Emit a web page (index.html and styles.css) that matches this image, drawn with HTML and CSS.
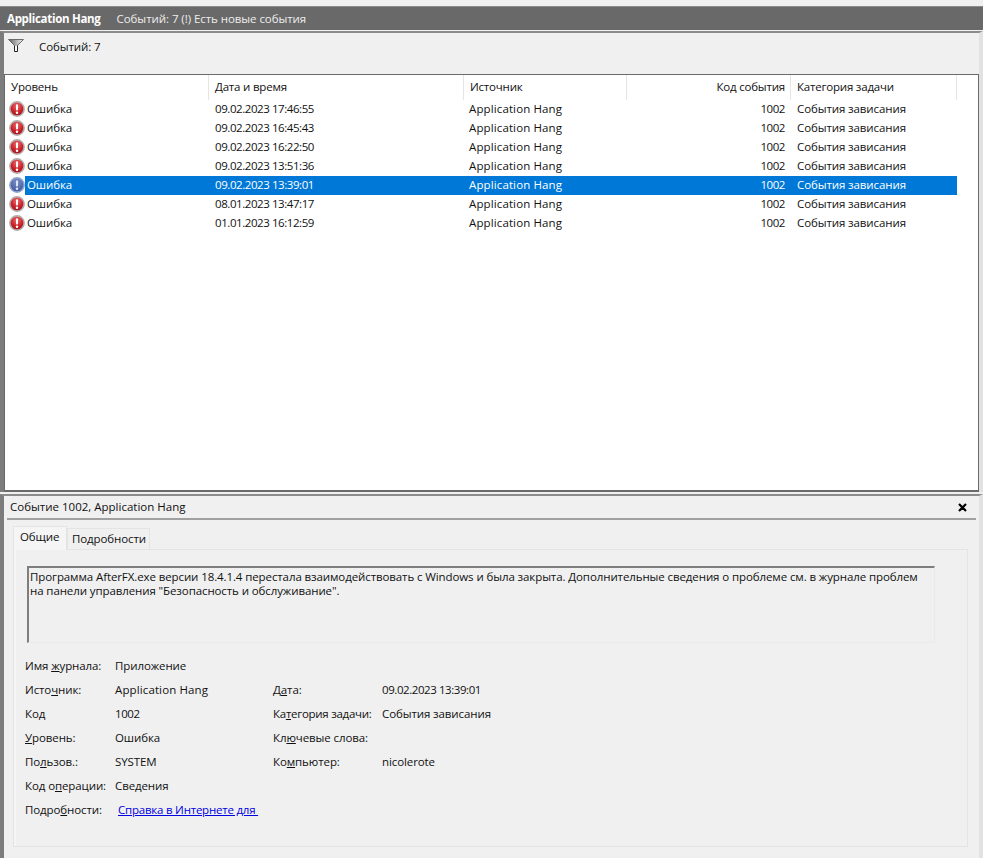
FILE: index.html
```html
<!DOCTYPE html>
<html lang="ru">
<head>
<meta charset="utf-8">
<title>Application Hang</title>
<link rel="stylesheet" href="styles.css">
</head>
<body>
<svg class="defs" width="0" height="0">
  <defs>
    <radialGradient id="red" cx="50%" cy="30%" r="70%">
      <stop offset="0" stop-color="#f06a6a"/><stop offset=".6" stop-color="#c9222a"/><stop offset="1" stop-color="#a30f18"/>
    </radialGradient>
    <radialGradient id="blue" cx="50%" cy="30%" r="70%">
      <stop offset="0" stop-color="#7b90c8"/><stop offset="1" stop-color="#3d5596"/>
    </radialGradient>
    <linearGradient id="fun" x1="0" x2="1" y1="0" y2="0">
      <stop offset="0" stop-color="#5f5f5f"/><stop offset=".55" stop-color="#b5b5b5"/><stop offset="1" stop-color="#f4f4f4"/>
    </linearGradient>
    <symbol id="err" viewBox="0 0 16 16">
      <circle cx="8" cy="8" r="7.1" fill="url(#red)" stroke="#b3aaaa" stroke-width="1.6"/>
      <rect x="7" y="3.2" width="2" height="6.4" rx="1" fill="#fff"/>
      <circle cx="8" cy="11.7" r="1.25" fill="#fff"/>
    </symbol>
    <symbol id="err-sel" viewBox="0 0 16 16">
      <circle cx="8" cy="8" r="7.1" fill="url(#blue)" stroke="#8fa3cf" stroke-width="1.6"/>
      <rect x="7" y="3.2" width="2" height="6.4" rx="1" fill="#dfe6f6"/>
      <circle cx="8" cy="11.7" r="1.25" fill="#dfe6f6"/>
    </symbol>
  </defs>
</svg>
<div class="app">
  <header class="titlebar"><b class="title">Application Hang</b><span>Событий: 7 (!) Есть новые события</span></header>
  <section class="top-pane">
    <div class="filterbar">
      <svg class="funnel" width="16" height="13" viewBox="0 0 16 13"><path d="M.5.5h15L9.5 6.5H6.5z" fill="url(#fun)" stroke="#6a6a6a"/><path d="M6.5 6.5h3v6h-3z" fill="#fff"/><path d="M6.5 6.5v6h3" fill="none" stroke="#222" stroke-width="1"/><path d="M9.5 6.5v6" stroke="#222"/></svg>
      <span>Событий: 7</span>
    </div>
    <div class="list">
      <div class="row head">
        <div class="cell">Уровень</div><div class="cell">Дата и время</div><div class="cell">Источник</div><div class="cell num">Код события</div><div class="cell">Категория задачи</div>
      </div>
      <div class="row"><div class="cell level"><svg class="ico"><use href="#err"/></svg><span class="lv">Ошибка</span></div><div class="cell digits">09.02.2023 17:46:55</div><div class="cell latin src">Application Hang</div><div class="cell num digits">1002</div><div class="cell">События зависания</div></div>
      <div class="row"><div class="cell level"><svg class="ico"><use href="#err"/></svg><span class="lv">Ошибка</span></div><div class="cell digits">09.02.2023 16:45:43</div><div class="cell latin src">Application Hang</div><div class="cell num digits">1002</div><div class="cell">События зависания</div></div>
      <div class="row"><div class="cell level"><svg class="ico"><use href="#err"/></svg><span class="lv">Ошибка</span></div><div class="cell digits">09.02.2023 16:22:50</div><div class="cell latin src">Application Hang</div><div class="cell num digits">1002</div><div class="cell">События зависания</div></div>
      <div class="row"><div class="cell level"><svg class="ico"><use href="#err"/></svg><span class="lv">Ошибка</span></div><div class="cell digits">09.02.2023 13:51:36</div><div class="cell latin src">Application Hang</div><div class="cell num digits">1002</div><div class="cell">События зависания</div></div>
      <div class="row selected"><div class="cell level"><svg class="ico"><use href="#err-sel"/></svg><span class="lv">Ошибка</span></div><div class="cell digits">09.02.2023 13:39:01</div><div class="cell latin src">Application Hang</div><div class="cell num digits">1002</div><div class="cell">События зависания</div></div>
      <div class="row"><div class="cell level"><svg class="ico"><use href="#err"/></svg><span class="lv">Ошибка</span></div><div class="cell digits">08.01.2023 13:47:17</div><div class="cell latin src">Application Hang</div><div class="cell num digits">1002</div><div class="cell">События зависания</div></div>
      <div class="row"><div class="cell level"><svg class="ico"><use href="#err"/></svg><span class="lv">Ошибка</span></div><div class="cell digits">01.01.2023 16:12:59</div><div class="cell latin src">Application Hang</div><div class="cell num digits">1002</div><div class="cell">События зависания</div></div>
    </div>
  </section>
  <section class="detail">
    <div class="detail-head"><span>Событие 1002, Application Hang</span>
      <svg class="close" width="9" height="9" viewBox="0 0 9 9"><path d="M1 1l7 7M8 1L1 8" stroke="#000" stroke-width="2.2"/></svg>
    </div>
    <div class="tabs"><div class="tab active">Общие</div><div class="tab">Подробности</div></div>
    <div class="tabpanel">
      <div class="message">Программа AfterFX.exe версии 18.4.1.4 перестала взаимодействовать с Windows и была закрыта. Дополнительные сведения о проблеме см. в журнале проблем на панели управления "Безопасность и обслуживание".</div>
      <div class="fields">
        <div>Имя <u>ж</u>урнала:</div><div>Приложение</div><div></div><div></div>
        <div>Исто<u>ч</u>ник:</div><div class="latin">Application Hang</div><div>Д<u>а</u>та:</div><div class="digits">09.02.2023 13:39:01</div>
        <div>Код</div><div class="digits">1002</div><div class="tight">Ка<u>т</u>егория задачи:</div><div>События зависания</div>
        <div><u>У</u>ровень:</div><div>Ошибка</div><div>Кл<u>ю</u>чевые слова:</div><div></div>
        <div>По<u>л</u>ьзов.:</div><div>SYSTEM</div><div>Ко<u>м</u>пьютер:</div><div>nicolerote</div>
        <div>Код о<u>п</u>ерации:</div><div>Сведения</div><div></div><div></div>
        <div>Подро<u>б</u>ности:</div><div><a class="link" href="#">Справка в Интернете для&nbsp;</a></div><div></div><div></div>
      </div>
    </div>
  </section>
</div>
</body>
</html>
```
FILE: styles.css
```css
* { box-sizing: border-box; }
html, body { margin: 0; height: 100%; }
body {
  background: #f0f0f0;
  font: 11.5px/16px "Open Sans", "Noto Sans", sans-serif;
  letter-spacing: -.1px;
  color: #111;
  overflow: hidden;
}
.defs { position: absolute; }
.digits { letter-spacing: -.43px; }
.latin { letter-spacing: .12px; }
.tight { letter-spacing: -.27px; }
.app { width: 983px; height: 858px; padding-top: 6px; display: flex; flex-direction: column; }
.titlebar {
  height: 24px;
  background: #696969;
  border-top: 1px solid #8a8a8a;
  color: #eee;
  display: flex;
  align-items: center;
  padding-left: 7px;
  gap: 16px;
  letter-spacing: -.06px;
}
.title { color: #fff; font-weight: 700; letter-spacing: -.3px; }
.top-pane {
  height: 461px;
  margin-top: 1px;
  border-top: 2px solid #8c8c8c;
  border-left: 4px solid #7c7c7c;
  border-right: 4px solid #e2e2e2;
  display: flex;
  flex-direction: column;
}
.filterbar { height: 41px; display: flex; padding: 6px 0 0 4px; gap: 15px; align-items: flex-start; }
.list { flex: 1; background: #fff; border: 1px solid #6a6a6a; border-bottom-width: 2px; padding-right: 20px; }
.row { display: grid; grid-template-columns: 204px 255px 163px 164px 166px; height: 19px; align-items: start; }
.head { height: 25px; letter-spacing: -.2px; }
.head .cell { height: 25px; line-height: 24px; border-right: 1px solid #e5e5e5; }
.cell { height: 19px; line-height: 18px; padding-left: 6px; white-space: nowrap; }
.src { padding-left: 5px; }
.num { text-align: right; padding-right: 5px; padding-left: 0; }
.num.digits { padding-right: 6px; }
.level { display: flex; align-items: center; padding-left: 4px; }
.ico { width: 16px; height: 16px; flex: none; position: relative; top: -1px; }
.lv { padding-left: 2px; flex: 1; height: 19px; line-height: 18px; }
.selected { color: #fff; }
.selected .cell:not(.level) { background: #0078d7; }
.selected .lv { background: #0078d7; }
.detail { flex: 1; display: flex; flex-direction: column; margin-top: 2px; border-top: 2px solid #8c8c8c; border-left: 4px solid #7c7c7c; border-right: 4px solid #e2e2e2; }
.detail-head { height: 24px; margin: 0 3px; border-bottom: 2px solid #a0a0a0; display: flex; justify-content: space-between; align-items: center; padding: 0 9px 1px 3px; letter-spacing: 0; }
.close { margin-top: 1px; }
.tabs { display: flex; margin: 6px 0 0 9px; height: 23px; align-items: flex-end; position: relative; z-index: 1; }
.tab { height: 21px; padding: 0 3px 0 4px; background: #f0f0f0; border: 1px solid #e4e4e4; border-bottom: 0; line-height: 20px; }
.tab.active { height: 24px; margin-bottom: -1px; width: 54px; padding: 0 0 0 6px; background: #f5f5f5; line-height: 20px; }
.tabpanel { margin: 0 11px 11px 9px; flex: 1; border: 1px solid #e4e4e4; box-shadow: inset 2px 0 0 #f5f5f5; padding: 16px 32px 0 13px; }
.message { height: 77px; padding: 2px 12px 0 1px; line-height: 14px; border: 1px solid #eaeaea; border-top: 2px solid #7e7e7e; border-left: 2px solid #7e7e7e; }
.fields { display: grid; grid-template-columns: 90px 158px 109px 1fr; grid-auto-rows: 24px; margin: 11px 0 0 -2px; align-items: center; }
.link { color: #0000e0; margin-left: 3px; letter-spacing: -.22px; }
```
